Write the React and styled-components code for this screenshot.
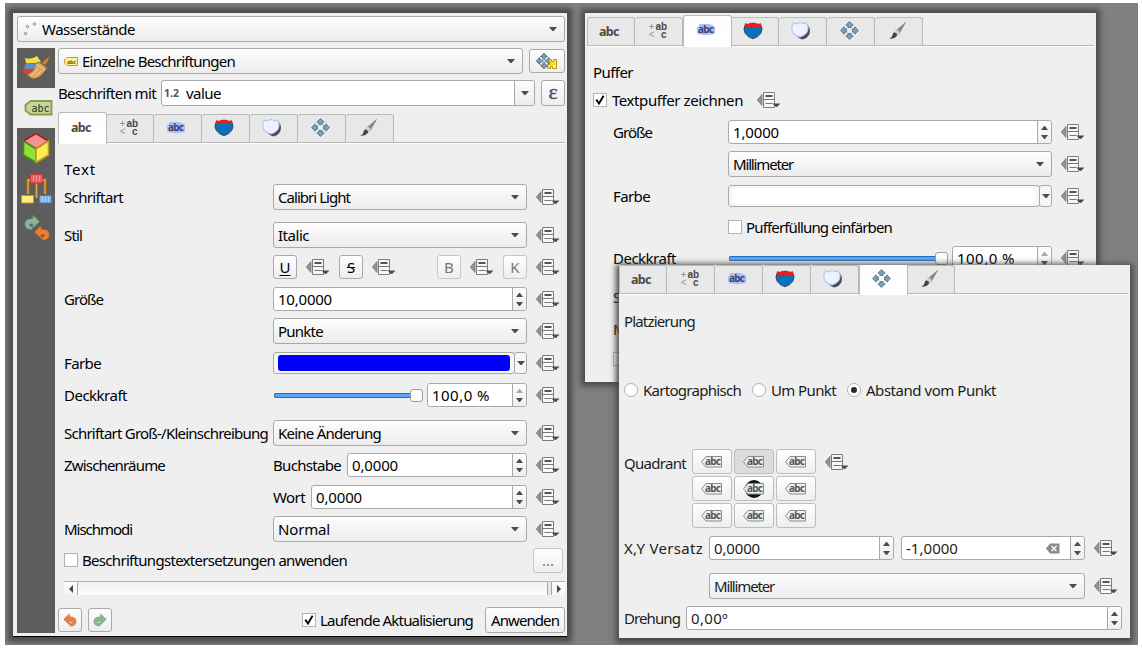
import React, { useLayoutEffect, useRef } from "react";
import styled, { createGlobalStyle, css } from "styled-components";

const GlobalStyle = createGlobalStyle`
  * { box-sizing: border-box; }
  body { margin: 0; background: #fff; }
  #root { font: 15px/20px "Noto Sans", "Open Sans", sans-serif; color: #000; }
  svg { display: block; flex: none; overflow: visible; }
`;

const Page = styled.div`
  width: 1142px;
  height: 651px;
  padding: 3px 4px 6px 5px;
  background: #fff;
`;
const Desktop = styled.main`
  position: relative;
  width: 1133px;
  height: 642px;
  overflow: hidden;
  background: #808080;
`;
const Window = styled.section`
  position: absolute;
  left: ${(p) => p.$x}px;
  top: ${(p) => p.$y}px;
  width: ${(p) => p.$w}px;
  height: ${(p) => p.$h}px;
  background: #efefef;
  box-shadow: 0 0 6px 4px #484848;
`;
const StyleWindow = styled(Window)`
  padding: 3px 2px 3px 4px;
  border-bottom: 1px solid #000;
  box-shadow: 0 0 5px 5px #4c4c4c;
`;
const BufferWindow = styled(Window)`
  padding: 2px 2px 0;
  overflow: clip;
  overflow-clip-margin: 12px;
`;
const PlacementWindow = styled(Window)`
  padding-right: 2px;
  color: #1c1c1c;
  box-shadow: 0 2px 6px 3px #484848;
`;
const Columns = styled.div`
  display: flex;
  gap: 3px;
  margin-top: 6px;
`;
const Sidebar = styled.nav`
  width: 38px;
  height: 585px;
  background: #5d5d5d;
`;
const SideItem = styled.div`
  display: flex;
  align-items: center;
  justify-content: center;
  height: 40px;
  padding-left: ${(p) => (p.$active ? 5 : 0)}px;
  background: ${(p) => (p.$active ? "#efefef" : "transparent")};
`;
const Main = styled.div`
  flex: 1;
  min-width: 0;
`;
const Row = styled.div`
  display: flex;
  align-items: center;
  height: ${(p) => p.$h || 24}px;
  margin-top: ${(p) => p.$mt || 0}px;
  padding-left: ${(p) => p.$pl || 0}px;
  gap: ${(p) => p.$gap || 0}px;
`;
const Form = styled.div`
  padding-left: ${(p) => p.$pl}px;
`;
const LabelCell = styled.div`
  flex: none;
  display: flex;
  align-items: center;
  width: ${(p) => p.$w}px;
`;
const Field = styled.div`
  flex: none;
  display: flex;
  align-items: center;
  width: ${(p) => p.$w}px;
  margin-right: 9px;
`;
const Spacer = styled.div`
  flex: 1;
`;
const frame = css`
  border: 1px solid #a9a9a9;
  border-radius: 3px;
`;
const Combo = styled.div`
  ${frame}
  display: flex;
  align-items: center;
  flex: ${(p) => (p.$w ? "none" : 1)};
  width: ${(p) => (p.$w ? p.$w + "px" : "auto")};
  height: 26px;
  padding: 0 7px 0 4px;
  background: linear-gradient(#fdfdfd, #ececec);
`;
const EditCombo = styled(Combo)`
  padding: 0 0 0 2px;
  background: #fff;
`;
const DropPart = styled.div`
  display: flex;
  align-items: center;
  justify-content: center;
  width: 20px;
  height: 100%;
  border-left: 1px solid #a9a9a9;
  background: linear-gradient(#fdfdfd, #ececec);
  border-radius: 0 3px 3px 0;
`;
const SpinBox = styled.div`
  ${frame}
  display: flex;
  align-items: center;
  flex: ${(p) => (p.$w ? "none" : 1)};
  width: ${(p) => (p.$w ? p.$w + "px" : "auto")};
  height: 24px;
  padding-left: 4px;
  background: #fff;
`;
const ClearSlot = styled.div`
  margin-right: 10px;
`;
const Steps = styled.div`
  display: flex;
  flex-direction: column;
  align-items: center;
  justify-content: center;
  gap: 5px;
  width: 14px;
  height: 100%;
  border-left: 1px solid #a9a9a9;
  border-radius: 0 3px 3px 0;
  background: linear-gradient(#fdfdfd, #efefef);
`;
const Button = styled.div`
  ${frame}
  flex: none;
  display: flex;
  align-items: center;
  justify-content: center;
  width: ${(p) => p.$w || 24}px;
  height: ${(p) => p.$h || 24}px;
  border-color: ${(p) => (p.$off ? "#c6c6c6" : "#a9a9a9")};
  color: ${(p) => (p.$off ? "#777" : "inherit")};
  background: ${(p) => (p.$down ? "#dcdcdc" : "linear-gradient(#fefefe, #eeeeee)")};
`;
const QuadrantButton = styled(Button)`
  padding-right: 2px;
  border-color: #bdbdbd;
`;
const Letter = styled.span`
  font-size: 15px;
  text-decoration: ${(p) => p.$line || "none"};
  text-underline-offset: 2px;
`;
const ColorWell = styled.div`
  ${frame}
  flex: 1;
  height: 22px;
  padding: 2px 4px;
  background: #f6f6f6;
`;
const Swatch = styled.div`
  height: 16px;
  border-radius: 3px;
  background: ${(p) => p.$color};
`;
const ColorDrop = styled.div`
  ${frame}
  display: flex;
  align-items: center;
  justify-content: center;
  width: 13px;
  height: 22px;
  margin-left: -1px;
  background: #f7f7f7;
`;
const Slider = styled.div`
  display: flex;
  align-items: center;
  flex: none;
  width: ${(p) => p.$w}px;
  margin: 0 4px 0 1px;
`;
const Track = styled.div`
  flex: 1;
  height: 5px;
  border: 1px solid #2a6cb5;
  border-right: 0;
  border-radius: 2px 0 0 2px;
  background: #58a6fa;
`;
const Handle = styled.div`
  width: 13px;
  height: 13px;
  border: 1px solid #9d9d9d;
  border-radius: 3px;
  background: #fbfbfb;
`;
const Box = styled.div`
  flex: none;
  display: flex;
  align-items: center;
  justify-content: center;
  width: 14px;
  height: 14px;
  border: 1px solid #b3b3b3;
  background: #fff;
`;
const RadioRing = styled(Box)`
  border-radius: 50%;
`;
const RadioDot = styled.div`
  width: 6px;
  height: 6px;
  border-radius: 50%;
  background: #2a2a2a;
`;
const TabBar = styled.div`
  display: flex;
  align-items: flex-end;
  height: ${(p) => p.$h || 32}px;
  padding-bottom: 1px;
  overflow: hidden;
  background: linear-gradient(#b7b7b7, #b7b7b7) 0 calc(100% - 1px) / 100% 1px no-repeat,
    linear-gradient(#fff, #fff) 0 100% / 100% 1px no-repeat;
`;
const Tab = styled.div`
  flex: none;
  display: flex;
  align-items: center;
  justify-content: center;
  width: ${(p) => (p.$active ? 49 : 48)}px;
  height: ${(p) => (p.$active ? 32 : 29)}px;
  margin-bottom: ${(p) => (p.$active ? -1 : 0)}px;
  margin-right: ${(p) => (p.$active ? -1 : 0)}px;
  padding: 0 4px ${(p) => (p.$active ? 3 : 2)}px 0;
  border: 1px solid #b9b9b9;
  border-left-color: ${(p) => (p.$first || p.$active ? "#b9b9b9" : "transparent")};
  border-bottom: ${(p) => (p.$active ? "0" : "1px solid #b7b7b7")};
  border-radius: 3px 3px 0 0;
  background: ${(p) => (p.$active ? "linear-gradient(#fdfdfd, #fff)" : "#e8e8e8")};
  position: relative;
  z-index: ${(p) => (p.$active ? 1 : 0)};
`;
const ScrollBar = styled.div`
  display: flex;
  align-items: center;
  width: 501px;
  height: 14px;
  margin-top: 8px;
  border-top: 1px solid #b5b5b5;
  background: linear-gradient(#f0f0f0, #fdfdfd);
`;
const ScrollEnd = styled.div`
  display: flex;
  align-items: center;
  justify-content: center;
  width: 14px;
  height: 13px;
  border-right: ${(p) => (p.$left ? "1px solid #a9a9a9" : 0)};
  border-left: ${(p) => (p.$left ? 0 : "1px solid #a9a9a9")};
  background: linear-gradient(#fefefe, #f4f4f4);
`;
const ScrollGrip = styled(ScrollEnd)`
  width: 4px;
  background: #e6e6e6;
`;
const Quadrants = styled.div`
  display: grid;
  grid-template-columns: repeat(3, 40px);
  grid-auto-rows: 25px;
  gap: 2px;
`;
const TextSpan = styled.span`
  display: inline-block;
  flex: none;
  white-space: pre;
`;

/* Text set to a given advance width, so the labels keep the toolkit's tight metrics. */
function T({ w, children }) {
  const ref = useRef(null);
  useLayoutEffect(() => {
    const el = ref.current;
    el.style.letterSpacing = "0px";
    el.style.letterSpacing = (w + 1 - el.getBoundingClientRect().width) / children.length + "px";
  }, [w, children]);
  return <TextSpan ref={ref}>{children}</TextSpan>;
}

const Down = () => (
  <svg width="8" height="4"><path d="M0 0H8L4.6 4H3.4Z" fill="#4e4e4e" /></svg>
);
const Step = ({ up, off }) => (
  <svg width="7" height="4"><path d={up ? "M0 4H7L4 0H3Z" : "M0 0H7L4 4H3Z"} fill={off ? "#a9a9a9" : "#4e4e4e"} /></svg>
);
const Override = () => (
  <svg width="23" height="17" viewBox="0 0 23 17">
    <path d="M.3 8L5 2.5V13.5Z" fill="#909396" stroke="#707070" strokeWidth=".7" />
    <path d="M6.5 .5H17.5V15.5H6.5Z" fill="#f7f7f7" stroke="#7c7c7c" />
    <path d="M8.5 4H15.5" stroke="#555" strokeWidth="2" />
    <path d="M6 7.5H18M8.5 11.5H15.5" stroke="#777" />
    <path d="M15.5 11.5H23.5L20 15H19Z" fill="#4b4b4b" />
  </svg>
);
const Tick = () => (
  <svg width="10" height="10"><path d="M1.3 4.6L4 8.5L8.6 .8" fill="none" stroke="#000" strokeWidth="1.9" /></svg>
);

const IconAbc = () => (
  <svg width="22" height="16"><text x="1" y="13" textLength="20.5" fontFamily="Noto Sans" fontWeight="700" fontSize="12.5" fill="#4c4c4c">abc</text></svg>
);
const IconFormat = () => (
  <svg width="22" height="20" fontFamily="Liberation Sans" fontWeight="700" fontSize="10" fill="#484848">
    <path d="M3 5.5H8M5.5 3V8" stroke="#999" />
    <text x="9.5" y="9" textLength="11.5">ab</text>
    <path d="M8 10.8L3.5 13.2L8 15.6" fill="none" stroke="#999" />
    <text x="15" y="17">c</text>
  </svg>
);
const IconBuffer = () => (
  <svg width="20" height="16">
    <path d="M3 4Q2 1 8 2Q12 1 16 3Q20 4 19 8Q20 13 15 12.5Q10 14 5 12.5Q0 13 1 8Q0 5 3 4Z" fill="#a9bdfb" />
    <text x="2" y="11" textLength="16" fontFamily="Noto Sans" fontWeight="700" fontSize="10" fill="#3b456a">abc</text>
  </svg>
);
const IconShield = () => (
  <svg width="20" height="18">
    <path d="M2.5 2Q5 3.5 7 2L10 1L13 2Q15 3.5 17.5 2Q20.5 7.5 17.8 11.5Q15 15.4 10 16.8Q5 15.4 2.2 11.5Q-.5 7.5 2.5 2Z" fill="#0870b8" stroke="#343a5a" strokeWidth=".8" />
    <path d="M2.4 1Q4 2.5 6 1.4Q8 .2 10 1.4Q12 .2 14 1.4Q16 2.5 17.6 1L18.6 5H1.4Z" fill="#e31e24" />
  </svg>
);
const IconShadow = () => (
  <svg width="20" height="18">
    <path d="M4 4L16.5 2.6Q20 7 18.5 12Q16 16.5 11.5 17.5Q6 16 4 11Z" fill="#4a4a4a" />
    <path d="M3 1Q5 2.5 7 1Q9 0 11 1Q13 2.5 15 1L16.5 3Q18 7 15.5 11Q13 14 9 15Q5 14 2 11Q0 6 1.5 2.5Z" fill="#edf3ff" stroke="#b4c4ee" strokeWidth="1.1" />
  </svg>
);
const arrow = "M9.5 .6L13.2 4.1L11.2 4.3V6.4H7.8V4.3L5.8 4.1Z";
const Arrows = ({ fill }) =>
  [0, 90, 180, 270].map((a) => (
    <path key={a} d={arrow} transform={`rotate(${a} 9.5 9.5)`} fill={fill} stroke="#4a6a80" strokeWidth=".8" />
  ));
const IconMove = () => <svg width="19" height="19"><Arrows fill="#7ea4ba" /></svg>;
const IconBrush = () => (
  <svg width="18" height="18">
    <path d="M17.5 .5L11.3 11.5L7.8 8.8Z" fill="#8b8b88" stroke="#666" strokeWidth=".5" />
    <path d="M8.8 7.6L12 10L9.7 12.5L6.7 10.2Z" fill="#d0d0cb" />
    <path d="M6.7 10.2L9.6 12.6Q8 17 .8 16.8Q4.4 15.5 4.8 12Q5.4 10.5 6.7 10.2Z" fill="#444" />
  </svg>
);
const IconAutoPlace = () => (
  <svg width="22" height="18">
    <g transform="translate(0 1) scale(.84)">
      <path d="M9.5 0L19 9.5L9.5 19L0 9.5Z" fill="#3d6380" />
      <path d="M5 5H14V14H5Z" fill="#fff" />
      <Arrows fill="#7ea4ba" />
      <path d="M8 8H11V11H8Z" fill="#fff" stroke="#3d6380" />
    </g>
    <path d="M11.5 12.5H14V10H13V7.5H15.5V9.5H17.5V7.5H20.5V16.5H16.5V14.5H14.5V16.5H11.5Z" fill="#f8df35" stroke="#bf9d14" />
    <path d="M17.5 13.5H19.5V15.5H17.5Z" fill="#fff" />
  </svg>
);
const IconPoints = () => (
  <svg width="14" height="16" fill="#fff" stroke="#777" strokeWidth=".9">
    <circle cx="12.5" cy="3" r="1.2" /><circle cx="5.5" cy="5.5" r="1.2" /><circle cx="3.5" cy="12.5" r="1.2" />
  </svg>
);
const IconYellowTag = () => (
  <svg width="15" height="9">
    <path d="M4 .5H14.5V8.5H4L1.5 6V3Z" fill="#fff29a" stroke="#bf9f1d" />
    <text x="4" y="6.6" textLength="9" fontFamily="Noto Sans" fontWeight="700" fontSize="5.5" fill="#66560a">abc</text>
  </svg>
);
const IconStyle = () => (
  <svg width="32" height="28">
    <path d="M5 4Q11 6 17 2L21 8Q11 10 6 9Z" fill="#f7dc48" />
    <path d="M6 9Q12 11 19 8L20 14Q12 17 4 14Z" fill="#5b91cd" />
    <path d="M4 14Q8 17 17 13L15 20Q8 21 2 19Z" fill="#dc3d35" />
    <path d="M30 2Q26 5 22 9L25 11Q29 7 30 2Z" fill="#d18e42" stroke="#94601f" strokeWidth=".7" />
    <path d="M16 10L19 8L27 14L24 18Q19 25 12 24.5L7 21L13 17Z" fill="#dba562" stroke="#9c6a30" strokeWidth=".8" />
    <path d="M16 10L25 16.5M18 15L11 22M21 17L14 23.5" stroke="#f2cf9b" strokeWidth="1" />
  </svg>
);
const IconLabelTag = () => (
  <svg width="29" height="18">
    <path d="M6.5 2H27.5V15.5H6.5L1.5 11.5V6Z" fill="#c2d69b" stroke="#8f9a49" strokeWidth="1.8" />
    <text x="7.5" y="12.6" textLength="18" fontFamily="DejaVu Sans Mono" fontSize="10" fill="#26331f">abc</text>
  </svg>
);
const IconCube = () => (
  <svg width="28" height="32" strokeWidth="1.6" strokeLinejoin="round">
    <path d="M1.5 9L14 1.5L26.5 9L14 17Z" fill="#f68f91" stroke="#a61c20" />
    <path d="M1.5 9L14 17V30.5L1.5 23Z" fill="#91e13a" stroke="#458f16" />
    <path d="M26.5 9L14 17V30.5L26.5 23Z" fill="#ffed52" stroke="#bb9e1c" />
  </svg>
);
const IconDiagram = () => (
  <svg width="31" height="31">
    <path d="M7 21V7H12M24 21V7H19M15.5 7V25" fill="none" stroke="#a56918" strokeWidth="3.2" />
    <path d="M7 21V7H12M24 21V7H19M15.5 7V25" fill="none" stroke="#e6a44c" strokeWidth="1.3" />
    <path d="M9.5 1.5H21.5V10H9.5Z" fill="#ed6163" stroke="#c9383c" />
    <path d="M.5 22.5H12.5V30H.5Z" fill="#ffec70" stroke="#c2982a" />
    <path d="M18.5 22.5H30.5V30H18.5Z" fill="#80b4ed" stroke="#497daf" />
    <path d="M3.5 24V29M6.5 24V29M9.5 24V29M21.5 24V29M24.5 24V29M27.5 24V29M12.5 3V8M15.5 3V8M18.5 3V8" stroke="#fff" opacity=".35" />
  </svg>
);
const undoPath = "M.8 6.4L6.3 1V4Q13.4 3.6 13 9Q12.5 13 7.5 13L6.4 10.6Q9.5 10.6 9.2 9Q8.8 7.8 6.3 8.4V11.5Z";
const IconUndo = () => (
  <svg width="14" height="14"><path d={undoPath} fill="#e98042" stroke="#cc6229" strokeWidth=".6" /></svg>
);
const IconRedo = () => (
  <svg width="14" height="14"><path d={undoPath} transform="matrix(-1 0 0 1 14 0)" fill="#86bd8d" stroke="#5f966b" strokeWidth=".6" /></svg>
);
const IconHistory = () => (
  <svg width="28" height="28">
    <path transform="matrix(-1.2 0 0 1.2 18.5 0)" d={undoPath} fill="#87b797" stroke="#5e9270" strokeWidth=".6" />
    <path transform="translate(11.5 10.5) scale(1.2)" d={undoPath} fill="#eb7d3b" stroke="#c95f24" strokeWidth=".6" />
  </svg>
);
const IconQuadrant = ({ center }) => (
  <svg width="23" height="20">
    {center && <circle cx="12" cy="10" r="9" fill="#151515" />}
    <path d="M6 4.5H21.5V15H6L1.5 9.8Z" fill="#efefef" stroke="#8a8a8a" />
    <text x="5" y="13.2" textLength="16" fontFamily="Noto Sans" fontWeight="700" fontSize="10" fill="#555">abc</text>
  </svg>
);
const IconClear = () => (
  <svg width="14" height="11"><path d="M4 .5H13.5V10.5H4L0 5.5Z" fill="#8b8b8b" /><path d="M5.5 3L10.5 8M10.5 3L5.5 8" stroke="#fff" strokeWidth="1.3" /></svg>
);

const TAB_ICONS = [IconAbc, IconFormat, IconBuffer, IconShield, IconShadow, IconMove, IconBrush];
const Tabs = ({ active, h }) => (
  <TabBar $h={h}>
    {TAB_ICONS.map((Icon, i) => (
      <Tab key={i} $active={i === active} $first={i === 0}><Icon /></Tab>
    ))}
  </TabBar>
);
const Select = ({ w, tw, children }) => (
  <Combo $w={w}><T w={tw}>{children}</T><Spacer /><Down /></Combo>
);
const Spin = ({ w, tw, max, clear, children }) => (
  <SpinBox $w={w}>
    <T w={tw}>{children}</T><Spacer />
    {clear && <ClearSlot><IconClear /></ClearSlot>}
    <Steps><Step up off={max} /><Step /></Steps>
  </SpinBox>
);
const Color = ({ color }) => (
  <><ColorWell><Swatch $color={color} /></ColorWell><ColorDrop><Down /></ColorDrop></>
);
const Check = ({ on }) => <Box>{on && <Tick />}</Box>;
const FormRow = ({ label, lw, labelWidth, fieldWidth, h, mt, children }) => (
  <Row $h={h} $mt={mt}>
    <LabelCell $w={labelWidth}>{label && <T w={lw}>{label}</T>}</LabelCell>
    <Field $w={fieldWidth}>{children}</Field>
    <Override />
  </Row>
);
const TextRow = (p) => <FormRow labelWidth={209} fieldWidth={254} {...p} />;
const BufferRow = (p) => <FormRow labelWidth={115} fieldWidth={324} {...p} />;

const ButtonPair = styled.div`
  display: flex;
  align-items: center;
  gap: 9px;
  margin-right: ${(p) => p.$mr || 0}px;
`;
const LiveUpdate = styled.div`
  display: flex;
  align-items: center;
  gap: 4px;
  width: 177px;
`;
const TypeMark = styled.span`
  width: 21px;
  margin-right: 1px;
  font-size: 10.5px;
  font-weight: 700;
  color: #555;
`;
const Epsilon = styled.span`
  font: 22px/20px "Liberation Serif", serif;
  color: #633d70;
  padding-bottom: 3px;
  -webkit-text-stroke: 0.4px #633d70;
`;
const Radio = styled.div`
  display: flex;
  align-items: center;
  gap: 5px;
  width: ${(p) => p.$w}px;
`;
const QuadrantRow = styled.div`
  display: flex;
  align-items: flex-start;
  margin-top: 49px;
  > ${LabelCell} { height: 27px; }
`;
const OverrideSlot = styled.div`
  padding: 5px 0 0 9px;
`;

function TextPanel() {
  return (
    <StyleWindow $x={8} $y={10} $w={554} $h={624}>
      <Combo $w={548}><LabelCell $w={20}><IconPoints /></LabelCell><T w={92}>Wasserstände</T><Spacer /><Down /></Combo>
      <Columns>
        <Sidebar>
          <SideItem><IconStyle /></SideItem>
          <SideItem $active><IconLabelTag /></SideItem>
          <SideItem><IconCube /></SideItem>
          <SideItem><IconDiagram /></SideItem>
          <SideItem><IconHistory /></SideItem>
        </Sidebar>
        <Main>
          <Row $h={26} $gap={6}>
            <Combo><LabelCell $w={19}><IconYellowTag /></LabelCell><T w={152}>Einzelne Beschriftungen</T><Spacer /><Down /></Combo>
            <Button $w={36}><IconAutoPlace /></Button>
          </Row>
          <Row $h={26} $mt={6} $gap={6}>
            <LabelCell $w={97}><T w={97}>Beschriften mit</T></LabelCell>
            <EditCombo><TypeMark>1.2</TypeMark><T w={34}>value</T><Spacer /><DropPart><Down /></DropPart></EditCombo>
            <Button $h={26}><Epsilon>ε</Epsilon></Button>
          </Row>
          <Row $h={32} $mt={6}><Main><Tabs active={0} /></Main></Row>
          <Form $pl={6}>
            <Row $h={20} $mt={15}><T w={31}>Text</T></Row>
            <TextRow h={26} mt={5} label="Schriftart" lw={58}><Select tw={71}>Calibri Light</Select></TextRow>
            <TextRow h={26} mt={12} label="Stil" lw={17}><Select tw={30}>Italic</Select></TextRow>
            <Row $h={24} $mt={7} $pl={209}>
              <ButtonPair $mr={10}><Button><Letter $line="underline">U</Letter></Button><Override /></ButtonPair>
              <ButtonPair $mr={42}><Button><Letter $line="line-through">S</Letter></Button><Override /></ButtonPair>
              <ButtonPair $mr={10}><Button $off><Letter>B</Letter></Button><Override /></ButtonPair>
              <ButtonPair><Button $off><Letter>K</Letter></Button><Override /></ButtonPair>
            </Row>
            <TextRow h={24} mt={8} label="Größe" lw={38}><Spin tw={53}>10,0000</Spin></TextRow>
            <TextRow h={26} mt={7}><Select tw={44}>Punkte</Select></TextRow>
            <TextRow h={22} mt={8} label="Farbe" lw={36}><Color color="#0000ff" /></TextRow>
            <TextRow h={24} mt={9} label="Deckkraft" lw={62}>
              <Slider $w={149}><Track /><Handle /></Slider><Spin tw={57} max>100,0 %</Spin>
            </TextRow>
            <TextRow h={26} mt={13} label="Schriftart Groß-/Kleinschreibung" lw={203}><Select tw={102}>Keine Änderung</Select></TextRow>
            <TextRow h={24} mt={7} label="Zwischenräume" lw={100}><LabelCell $w={74}><T w={67}>Buchstabe</T></LabelCell><Spin tw={45}>0,0000</Spin></TextRow>
            <TextRow h={24} mt={8}><LabelCell $w={38}><T w={31}>Wort</T></LabelCell><Spin tw={45}>0,0000</Spin></TextRow>
            <TextRow h={26} mt={7} label="Mischmodi" lw={67}><Select tw={51}>Normal</Select></TextRow>
            <Row $h={24} $mt={6} $gap={4}>
              <Check /><T w={264}>Beschriftungstextersetzungen anwenden</T><Spacer />
              <ButtonPair $mr={2}><Button $w={30} $h={25} $off>...</Button></ButtonPair>
            </Row>
            <Row $h={1} />
            <ScrollBar>
              <ScrollEnd $left><svg width="4" height="8"><path d="M4 0V8L0 4Z" fill="#444" /></svg></ScrollEnd>
              <Spacer />
              <ScrollGrip />
              <ScrollEnd><svg width="4" height="8"><path d="M0 0V8L4 4Z" fill="#444" /></svg></ScrollEnd>
            </ScrollBar>
          </Form>
          <Row $h={26} $mt={12} $gap={6}>
            <Button><IconUndo /></Button><Button><IconRedo /></Button><Spacer />
            <LiveUpdate><Check on /><T w={152}>Laufende Aktualisierung</T></LiveUpdate>
            <Button $w={80} $h={26}><T w={67}>Anwenden</T></Button>
          </Row>
        </Main>
      </Columns>
    </StyleWindow>
  );
}

function BufferPanel() {
  return (
    <BufferWindow $x={580} $y={10} $w={511} $h={369}>
      <Tabs active={2} />
      <Form $pl={6}>
        <Row $h={20} $mt={15}><T w={39}>Puffer</T></Row>
        <Row $h={24} $mt={6} $gap={5}><Check on /><LabelCell $w={140}><T w={130}>Textpuffer zeichnen</T></LabelCell><Override /></Row>
        <Form $pl={20}>
          <BufferRow h={24} mt={8} label="Größe" lw={38}><Spin tw={45}>1,0000</Spin></BufferRow>
          <BufferRow h={26} mt={7}><Select tw={59}>Millimeter</Select></BufferRow>
          <BufferRow h={22} mt={8} label="Farbe" lw={36}><Color color="#ffffff" /></BufferRow>
          <Row $h={24} $mt={8} $pl={115} $gap={4}><Check /><T w={145}>Pufferfüllung einfärben</T></Row>
          <BufferRow h={24} mt={7} label="Deckkraft" lw={62}>
            <Slider $w={219}><Track /><Handle /></Slider><Spin tw={57} max>100,0 %</Spin>
          </BufferRow>
          <Row $h={20} $mt={17}><T w={46}>Stiftstil</T></Row>
          <Row $h={20} $mt={12}><T w={67}>Mischmodi</T></Row>
          <Row $h={20} $mt={10}><Check /></Row>
        </Form>
      </Form>
    </BufferWindow>
  );
}

function PlacementPanel() {
  return (
    <PlacementWindow $x={614} $y={262} $w={511} $h={373}>
      <Tabs active={5} h={30} />
      <Form $pl={5}>
        <Row $h={20} $mt={16}><T w={70}>Platzierung</T></Row>
        <Row $h={20} $mt={49}>
          <Radio $w={128}><RadioRing /><T w={97}>Kartographisch</T></Radio>
          <Radio $w={95}><RadioRing /><T w={64}>Um Punkt</T></Radio>
          <Radio $w={170}><RadioRing><RadioDot /></RadioRing><T w={129}>Abstand vom Punkt</T></Radio>
        </Row>
        <QuadrantRow>
          <LabelCell $w={68}><T w={61}>Quadrant</T></LabelCell>
          <Quadrants>
            {Array.from({ length: 9 }, (_, i) => (
              <QuadrantButton key={i} $w={40} $h={25} $down={i === 1}><IconQuadrant center={i === 4} /></QuadrantButton>
            ))}
          </Quadrants>
          <OverrideSlot><Override /></OverrideSlot>
        </QuadrantRow>
        <Row $h={24} $mt={8}>
          <LabelCell $w={85}><T w={78}>X,Y Versatz</T></LabelCell>
          <Field $w={376}><Spin w={185} tw={45}>0,0000</Spin><Spacer /><Spin w={184} tw={51} clear>-1,0000</Spin></Field>
          <Override />
        </Row>
        <Row $h={26} $mt={13} $pl={85}><Field $w={376}><Select tw={59}>Millimeter</Select></Field><Override /></Row>
        <Row $h={24} $mt={7}>
          <LabelCell $w={62}><T w={55}>Drehung</T></LabelCell>
          <Spin w={436} tw={36}>0,00º</Spin>
        </Row>
      </Form>
    </PlacementWindow>
  );
}

export default function App() {
  return (
    <Page>
      <GlobalStyle />
      <Desktop>
        <TextPanel />
        <BufferPanel />
        <PlacementPanel />
      </Desktop>
    </Page>
  );
}
